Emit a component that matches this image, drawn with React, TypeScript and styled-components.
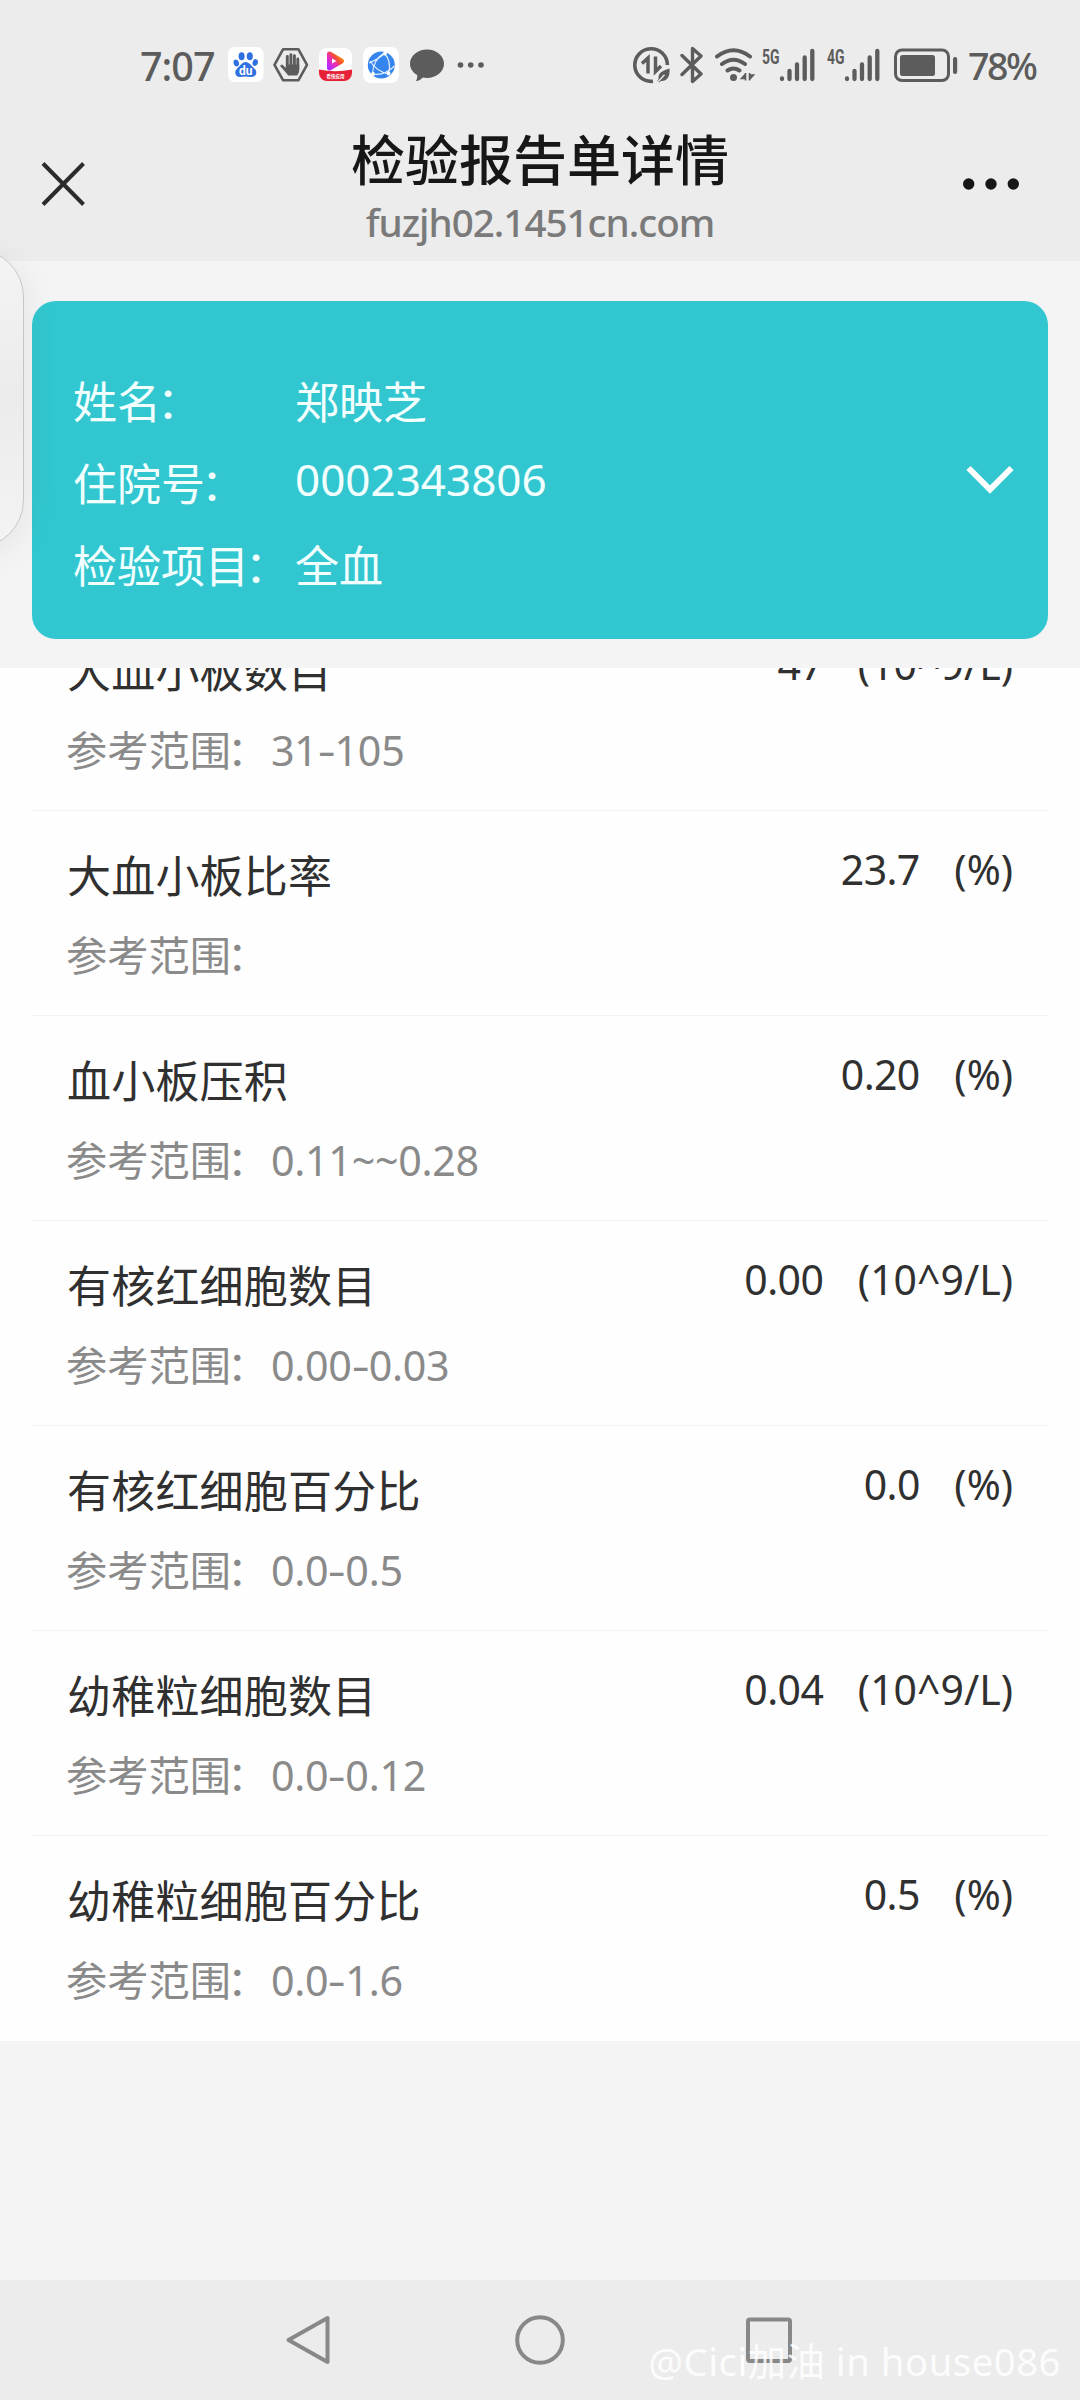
import React from 'react';
import styled, { createGlobalStyle } from 'styled-components';

const GlobalStyle = createGlobalStyle`
  body {
    margin: 0;
    background: #f4f4f4;
  }
  * {
    box-sizing: border-box;
  }
`;

const Screen = styled.div`
  position: relative;
  display: flex;
  flex-direction: column;
  width: 1080px;
  height: 2400px;
  overflow: hidden;
  background: #f4f4f4;
  font-family: 'Noto Sans', 'Noto Sans CJK SC', sans-serif;
`;

const StatusBar = styled.div`
  display: flex;
  justify-content: space-between;
  align-items: center;
  height: 130px;
  padding: 0 43px 0 140px;
  background: #ececec;
  color: #5c5c5c;
`;

const StatusGroup = styled.div`
  display: flex;
  align-items: center;
  height: 40px;
`;

const Clock = styled.span`
  width: 88px;
  font-size: 39.5px;
  font-weight: 500;
  line-height: 44px;
  letter-spacing: -1px;
  padding-top: 2px;
`;

const Percent = styled.span`
  width: 69px;
  margin-left: 10px;
  font-size: 37.5px;
  font-weight: 500;
  line-height: 44px;
  letter-spacing: -2.4px;
  padding-top: 2px;
  white-space: nowrap;
`;

const Glyph = styled.svg<{ $ml?: number }>`
  display: block;
  flex: none;
  margin-left: ${(p) => p.$ml ?? 0}px;
`;

const Header = styled.header`
  display: flex;
  justify-content: space-between;
  align-items: flex-start;
  height: 131px;
  padding: 0 60px 0 40px;
  background: #ececec;
`;

const HeaderSide = styled.div<{ $end?: boolean }>`
  display: flex;
  justify-content: ${(p) => (p.$end ? 'flex-end' : 'flex-start')};
  width: 200px;
  padding-top: 30px;
`;

const Heading = styled.div`
  display: flex;
  flex-direction: column;
  align-items: center;
  margin-left: 20px;
`;

const Title = styled.h1`
  margin: 0;
  color: #171717;
  font-size: 54px;
  font-weight: 500;
  line-height: 60px;
`;

const Url = styled.div`
  margin-top: 2px;
  color: #7a7a7a;
  font-size: 38.6px;
  font-weight: 500;
  letter-spacing: -1px;
  line-height: 60px;
  white-space: nowrap;
`;

const CardArea = styled.section`
  height: 407px;
  padding: 40px 32px 0;
`;

const PatientCard = styled.div`
  display: flex;
  align-items: center;
  justify-content: space-between;
  height: 338px;
  padding: 19px 34px 0 41px;
  border-radius: 24px;
  background: #32c7d0;
  color: #f2ffff;
`;

const Fields = styled.div`
  display: flex;
  flex-direction: column;
  padding-top: 8px;
`;

const Field = styled.div`
  display: flex;
  height: 82px;
  font-size: 44px;
  line-height: 82px;
  white-space: nowrap;
`;

const FieldLabel = styled.span`
  width: 222px;
`;

const FieldValue = styled.span<{ $lift?: boolean }>`
  line-height: ${(p) => (p.$lift ? 72 : 82)}px;
`;

const Colon = styled.span`
  margin-left: -4px;
`;

const ResultList = styled.ul`
  display: flex;
  flex-direction: column;
  justify-content: flex-end;
  height: 1373px;
  margin: 0;
  padding: 0 32px;
  overflow: hidden;
  background: #fefefe;
  list-style: none;
`;

const ResultItem = styled.li`
  display: flex;
  flex: none;
  justify-content: space-between;
  height: 205px;
  padding: 0 35px 0 34px;
  border-bottom: 1px solid #f3f3f3;
  &:last-child {
    border-bottom-color: transparent;
  }
`;

const ResultInfo = styled.div`
  padding-top: 35px;
`;

const ResultName = styled.div`
  padding-left: 1px;
  color: #303030;
  font-size: 44px;
  letter-spacing: 0.2px;
  line-height: 60px;
`;

const Reference = styled.div`
  display: flex;
  margin-top: 19px;
  color: #8a8a8a;
  font-size: 41.25px;
  line-height: 60px;
  white-space: nowrap;
`;

const ReferenceLabel = styled.span`
  width: 205px;
`;

const Range = styled.span`
  letter-spacing: -0.3px;
`;

const Dash = styled.span`
  display: inline-block;
  margin: 0 2px;
  transform: scaleX(1.35);
`;

const ResultValue = styled.div`
  display: flex;
  gap: 34px;
  padding-top: 28px;
  color: #303030;
  font-size: 41px;
  line-height: 60px;
  white-space: nowrap;
`;

const Measured = styled.span`
  margin-right: 0.6px;
  letter-spacing: -0.6px;
`;

const Spacer = styled.div`
  flex: 1;
`;

const NavBar = styled.nav`
  display: flex;
  align-items: center;
  justify-content: center;
  gap: 177px;
  height: 120px;
  background: #ececec;
`;

const EdgePanel = styled.aside`
  position: absolute;
  top: 249px;
  left: -80px;
  width: 104px;
  height: 299px;
  border: 1px solid #c6c6c6;
  border-radius: 48px;
  background: linear-gradient(#f4f4f4, #ebebeb 50%, #f4f4f4);
  box-shadow: 0 6px 36px rgba(0, 0, 0, 0.07);
`;

const Watermark = styled.div`
  position: absolute;
  right: 19px;
  bottom: 9px;
  color: rgba(255, 255, 255, 0.85);
  font-size: 38.3px;
  letter-spacing: 0.5px;
  line-height: 60px;
  white-space: nowrap;
`;

const Small = 'Roboto, sans-serif';

function BaiduIcon() {
  return (
    <Glyph width="36" height="36" viewBox="0 0 36 36">
      <rect x="0" y="0" width="35.5" height="35" rx="7" fill="#fff" />
      <g fill="#2f6fe0">
        <ellipse cx="13.6" cy="9.3" rx="3" ry="4" />
        <ellipse cx="21.8" cy="9.3" rx="3" ry="4" />
        <ellipse cx="8.3" cy="16" rx="2.6" ry="3.5" transform="rotate(-20 8.3 16)" />
        <ellipse cx="27.2" cy="15.6" rx="2.6" ry="3.5" transform="rotate(15 27.2 15.6)" />
        <path d="M17.7 15c3 0 4.6 2.4 6.4 4.2 2.400 2.200 4.400 4 4.200 6.600-.2 3-2.600 4.300-5.200 4.200-1.800-.1-3.400-.4-5.400-.4s-3.600.3-5.400.4C9.700 30.100 7.500 28.800 7.300 25.800c-.2-2.600 1.800-4.400 4.100-6.600C13.200 17.400 14.700 15 17.700 15z" />
      </g>
      <text x="17.8" y="28" textAnchor="middle" fontFamily={Small} fontSize="12" fontWeight="700" fill="#fff">du</text>
    </Glyph>
  );
}

function HandIcon() {
  return (
    <Glyph $ml={9} width="36" height="36" viewBox="0 0 36 36">
      <path d="M10 2.300h15.500L34 17.800l-8.500 15.400H10L1.500 17.800z" fill="none" stroke="#5c5c5c" strokeWidth="2.600" strokeLinejoin="round" />
      <g stroke="#5c5c5c" strokeWidth="2.900" strokeLinecap="round" fill="none">
        <path d="M14.300 9.500v11M17.900 7.800v12M21.400 8.600v12M24.800 12v10M8.800 19l4.600 4.500" />
      </g>
      <path d="M12.900 17.500h13.300v6c0 2.800-1.500 3.600-2 5H15.200L10 22l2.900-.5z" fill="#5c5c5c" />
    </Glyph>
  );
}

function VideoIcon() {
  return (
    <Glyph $ml={10} width="34" height="36" viewBox="0 0 34 36">
      <defs>
        <linearGradient id="play" x1="0" y1="1" x2="1" y2="0">
          <stop offset="0" stopColor="#b52bff" />
          <stop offset=".4" stopColor="#ef2fb0" />
          <stop offset=".65" stopColor="#f5502c" />
          <stop offset="1" stopColor="#ffb01e" />
        </linearGradient>
        <clipPath id="tile"><rect x="0" y="1" width="33" height="33" rx="8" /></clipPath>
      </defs>
      <g clipPath="url(#tile)">
        <rect y="1" width="33" height="33" fill="#fff" />
        <path d="M10.500 7L22.500 14l-12 7z" fill="none" stroke="url(#play)" strokeWidth="5" strokeLinejoin="round" />
        <path d="M0 22.500q16.500 3.500 33 0V34H0z" fill="#e62036" />
      </g>
      <text x="16.500" y="31" textAnchor="middle" fontFamily="'Noto Sans CJK SC', sans-serif" fontSize="4.500" fontWeight="700" fill="#fff">看快应用</text>
    </Glyph>
  );
}

function GlobeIcon() {
  return (
    <Glyph $ml={10} width="36" height="36" viewBox="0 0 36 36">
      <rect width="36" height="36" rx="8" fill="#fff" />
      <circle cx="18.300" cy="18" r="13.500" fill="#3585ee" />
      <g fill="none" stroke="#e4f0ff" strokeWidth="1.200">
        <path d="M21 6Q10 13 9.500 27M21 6q8 8 4.500 21M6 16q10-4 16-10M9.500 27q12 2 22-8M7 14q6 10 18.500 13" />
      </g>
      <g fill="#fff">
        <circle cx="22" cy="6.500" r="2" />
        <circle cx="10" cy="27" r="2" />
        <circle cx="25.500" cy="26.500" r="2" />
      </g>
    </Glyph>
  );
}

function BubbleIcon() {
  return (
    <Glyph $ml={11} width="34" height="36" viewBox="0 0 34 36">
      <path d="M17 2.500c9.400 0 17 6.300 17 14.200s-7.600 14.200-17 14.200c-1.500 0-2.800-.2-4.100-.5-2 2-4 3.200-7 3.700 1.100-1.700 1.500-3.600 1.300-6C3 25.500 0 21.400 0 16.700 0 8.800 7.600 2.500 17 2.500z" fill="#5c5c5c" />
    </Glyph>
  );
}

function MoreSmallIcon() {
  return (
    <Glyph $ml={13} width="28" height="8" viewBox="0 0 28 8" fill="#5c5c5c">
      <circle cx="3.500" cy="4" r="2.800" />
      <circle cx="13.700" cy="4" r="2.800" />
      <circle cx="24" cy="4" r="2.800" />
    </Glyph>
  );
}

function DataSaverIcon() {
  return (
    <Glyph width="38" height="38" viewBox="0 0 38 38">
      <path d="M34.400 19A16.300 16.300 0 1 0 20 35.200" fill="none" stroke="#5c5c5c" strokeWidth="3.600" />
      <path d="M15 27.500V12l-6 5.500M22.500 10.500v15l5.500-5.500" fill="none" stroke="#5c5c5c" strokeWidth="3.500" />
      <path d="M36.500 22.500c1 8.500-3 13-8.500 12.500l-2 1.500-1.800-1.500 1.400-2c-1-7 5-8.300 10.900-10.500z" fill="#5c5c5c" />
      <path d="M25 35.800l6.500-7" stroke="#ececec" strokeWidth="1.300" />
    </Glyph>
  );
}

function BluetoothIcon() {
  return (
    <Glyph $ml={9} width="24" height="38" viewBox="0 0 24 38">
      <path d="M2 9.500l19 18.500-8.500 7.500v-33L21 10 2 28.500" fill="none" stroke="#5c5c5c" strokeWidth="3.400" strokeLinecap="round" strokeLinejoin="round" />
    </Glyph>
  );
}

function WifiIcon() {
  return (
    <Glyph $ml={10} width="42" height="38" viewBox="0 0 42 38">
      <g fill="none" stroke="#5c5c5c" strokeWidth="4" strokeLinecap="round">
        <path d="M3 10.500q16.500-12.500 33 0M8 18q11.500-8.500 23 0M13.500 24.500q6-4 12 0" />
      </g>
      <circle cx="19.500" cy="31.500" r="3.500" fill="#5c5c5c" />
      <path d="M31.500 27v7.500M31.500 28l-4 4.500h4M35.500 27v7.500M35.500 33.500l4-4.500h-4" stroke="#5c5c5c" strokeWidth="1.600" fill="#5c5c5c" />
    </Glyph>
  );
}

function SignalIcon({ label, ml }: { label: string; ml: number }) {
  return (
    <Glyph $ml={ml} width="54" height="38" viewBox="0 0 54 38">
      <text x="0" y="17.500" fontFamily={Small} fontSize="21" fontWeight="700" fill="#5c5c5c" textLength="17.500" lengthAdjust="spacingAndGlyphs">{label}</text>
      <g stroke="#5c5c5c" strokeWidth="4.300" strokeLinecap="round">
        <path d="M20 32.500v.5M27.500 25v8M35 18.500V33M42.700 11.500V33M50.300 5V33" />
      </g>
    </Glyph>
  );
}

function BatteryIcon() {
  return (
    <Glyph $ml={13} width="64" height="38" viewBox="0 0 64 38">
      <rect x="1.500" y="4" width="53" height="30.500" rx="6.500" fill="none" stroke="#5c5c5c" strokeWidth="3" />
      <rect x="6" y="9" width="35" height="21" rx="2.500" fill="#5c5c5c" />
      <rect x="59" y="11" width="4.200" height="17" rx="2" fill="#5c5c5c" />
    </Glyph>
  );
}

function RangeText({ text }: { text: string }) {
  const [low, high] = text.split('-');
  return (
    <Range>
      {low}
      {high !== undefined && <Dash>-</Dash>}
      {high}
    </Range>
  );
}

interface Result {
  name: string;
  value: string;
  unit: string;
  range: string;
}

const patient = [
  { label: '姓名', value: '郑映芝' },
  { label: '住院号', value: '0002343806' },
  { label: '检验项目', value: '全血' },
];

const results: Result[] = [
  { name: '大血小板数目', value: '47', unit: '(10^9/L)', range: '31-105' },
  { name: '大血小板比率', value: '23.7', unit: '(%)', range: '' },
  { name: '血小板压积', value: '0.20', unit: '(%)', range: '0.11~~0.28' },
  { name: '有核红细胞数目', value: '0.00', unit: '(10^9/L)', range: '0.00-0.03' },
  { name: '有核红细胞百分比', value: '0.0', unit: '(%)', range: '0.0-0.5' },
  { name: '幼稚粒细胞数目', value: '0.04', unit: '(10^9/L)', range: '0.0-0.12' },
  { name: '幼稚粒细胞百分比', value: '0.5', unit: '(%)', range: '0.0-1.6' },
];

export default function App() {
  return (
    <Screen>
      <GlobalStyle />
      <StatusBar>
        <StatusGroup>
          <Clock>7:07</Clock>
          <BaiduIcon />
          <HandIcon />
          <VideoIcon />
          <GlobeIcon />
          <BubbleIcon />
          <MoreSmallIcon />
        </StatusGroup>
        <StatusGroup>
          <DataSaverIcon />
          <BluetoothIcon />
          <WifiIcon />
          <SignalIcon label="5G" ml={6} />
          <SignalIcon label="4G" ml={11} />
          <BatteryIcon />
          <Percent>78%</Percent>
        </StatusGroup>
      </StatusBar>

      <Header>
        <HeaderSide>
          <Glyph width="46" height="48" viewBox="0 0 46 48">
            <path d="M3 3.500l40.500 41M43.500 3.500L3 44.500" stroke="#2b2b2b" strokeWidth="4" />
          </Glyph>
        </HeaderSide>
        <Heading>
          <Title>检验报告单详情</Title>
          <Url>fuzjh02.1451cn.com</Url>
        </Heading>
        <HeaderSide $end>
          <Glyph width="58" height="48" viewBox="0 0 58 48" fill="#171717">
            <circle cx="6.700" cy="24" r="5.700" />
            <circle cx="29" cy="24" r="5.700" />
            <circle cx="51.300" cy="24" r="5.700" />
          </Glyph>
        </HeaderSide>
      </Header>

      <CardArea>
        <PatientCard>
          <Fields>
            {patient.map((f) => (
              <Field key={f.label}>
                <FieldLabel>
                  {f.label}
                  <Colon>：</Colon>
                </FieldLabel>
                <FieldValue $lift={/^\d/.test(f.value)}>{f.value}</FieldValue>
              </Field>
            ))}
          </Fields>
          <Glyph width="48" height="30" viewBox="0 0 48 30">
            <path d="M2.500 3L24 24.500 45.500 3" fill="none" stroke="#fff" strokeWidth="6" />
          </Glyph>
        </PatientCard>
      </CardArea>

      <ResultList>
        {results.map((r) => (
          <ResultItem key={r.name}>
            <ResultInfo>
              <ResultName>{r.name}</ResultName>
              <Reference>
                <ReferenceLabel>
                  参考范围
                  <Colon>：</Colon>
                </ReferenceLabel>
                <RangeText text={r.range} />
              </Reference>
            </ResultInfo>
            <ResultValue>
              <Measured>{r.value}</Measured>
              <span>{r.unit}</span>
            </ResultValue>
          </ResultItem>
        ))}
      </ResultList>

      <Spacer />

      <NavBar>
        <Glyph width="52" height="56" viewBox="0 0 52 56">
          <path d="M42.500 6v44L3.500 28z" fill="none" stroke="#888" strokeWidth="4" strokeLinejoin="round" />
        </Glyph>
        <Glyph width="52" height="56" viewBox="0 0 52 56">
          <circle cx="26" cy="28" r="22.800" fill="none" stroke="#888" strokeWidth="4" />
        </Glyph>
        <Glyph width="52" height="56" viewBox="0 0 52 56">
          <rect x="5" y="7.500" width="42" height="41.500" rx="2" fill="none" stroke="#888" strokeWidth="4" />
        </Glyph>
      </NavBar>

      <EdgePanel />
      <Watermark>@Cici加油 in house086</Watermark>
    </Screen>
  );
}
